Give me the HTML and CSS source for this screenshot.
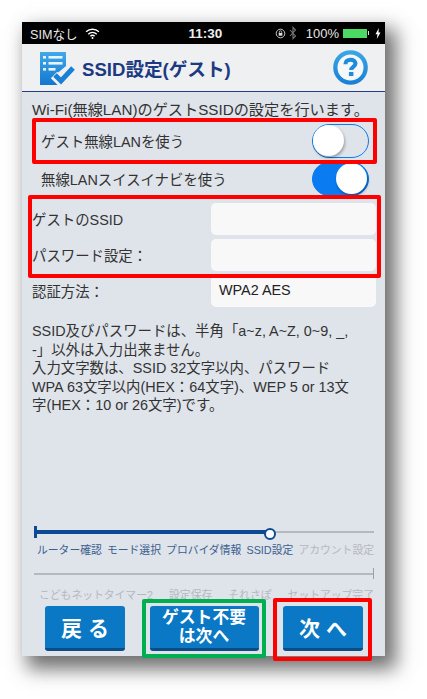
FILE: index.html
```html
<!DOCTYPE html>
<html lang="ja">
<head>
<meta charset="utf-8">
<title>SSID設定(ゲスト)</title>
<link rel="stylesheet" href="styles.css">
</head>
<body>
<div class="phone">
  <div class="status">
    <div class="status-left">
      <span>SIMなし</span>
      <svg class="wifi" viewBox="0 0 16 12" width="15" height="11"><path d="M1 4.2a10 10 0 0 1 14 0M3.4 6.7a6.6 6.6 0 0 1 9.2 0M5.7 9a3.3 3.3 0 0 1 4.6 0" fill="none" stroke="#fff" stroke-width="1.5"/><circle cx="8" cy="10.8" r="1.1" fill="#fff"/></svg>
    </div>
    <div class="status-time">11:30</div>
    <div class="status-right">
      <svg viewBox="0 0 12 12" width="11" height="11"><circle cx="6" cy="6" r="4.7" fill="none" stroke="#ddd" stroke-width="1"/><rect x="4" y="5.4" width="4" height="3" fill="#ddd"/><path d="M4.7 5.4V4.4a1.3 1.3 0 0 1 2.6 0v1" fill="none" stroke="#ddd" stroke-width=".8"/></svg>
      <svg viewBox="0 0 8 14" width="8" height="14"><path d="M1 4l5.5 6L4 12.6V1.4L6.5 4 1 10" fill="none" stroke="#777" stroke-width="1.1"/></svg>
      <span class="pct">100%</span>
      <span class="battery"></span>
      <span class="battery-tip"></span>
      <svg viewBox="0 0 6 11" width="6" height="11"><path d="M3.8 0L0.5 6.2h2L1.8 11 5.5 4.6h-2z" fill="#fff"/></svg>
    </div>
  </div>

  <header class="title-bar">
    <div class="title-main">
      <svg class="title-icon" viewBox="0 0 36 34" width="36" height="34">
        <defs><linearGradient id="g" x1="0" y1="0" x2="0" y2="1"><stop offset="0" stop-color="#3fa9ea"/><stop offset="1" stop-color="#1477cf"/></linearGradient></defs>
        <path d="M0 0h26v14L14 24l4 9H0z" fill="url(#g)"/>
        <g fill="#e8f3fb"><rect x="3" y="4" width="3" height="2.6"/><rect x="8.5" y="4" width="14" height="2.6"/><rect x="3" y="10" width="3" height="2.6"/><rect x="8.5" y="10" width="14" height="2.6"/><rect x="3" y="16" width="3" height="2.6"/><rect x="8.5" y="16" width="7" height="2.6"/></g>
        <path d="M14 23l7 7 13-14" fill="none" stroke="#eff0f2" stroke-width="9"/>
        <path d="M15 23l6 6 12-13" fill="none" stroke="#1c7fd6" stroke-width="5"/>
      </svg>
      <h1 class="title-text">SSID設定(ゲスト)</h1>
    </div>
    <svg class="help" viewBox="0 0 36 36" width="35" height="35">
      <defs><linearGradient id="h" x1="0" y1="0" x2="0" y2="1"><stop offset="0" stop-color="#3aa5e6"/><stop offset="1" stop-color="#1a82d6"/></linearGradient></defs>
      <circle cx="18" cy="18" r="15.6" fill="#f5f7f9" stroke="url(#h)" stroke-width="4.4"/>
      <path d="M12.8 14.6c0-2.9 2.2-4.6 5.3-4.6 3 0 5 1.5 5 3.9 0 3.4-4.4 3.4-4.4 6.6" fill="none" stroke="#1f8bdc" stroke-width="4.2"/>
      <rect x="16.4" y="22.6" width="4.6" height="4.2" fill="#1f8bdc"/>
    </svg>
  </header>

  <main class="content">
    <p class="intro">Wi-Fi(無線LAN)のゲストSSIDの設定を行います。</p>

    <div class="switch-row switch-row-first">
      <span class="row-label">ゲスト無線LANを使う</span>
      <span class="toggle"><span class="knob"></span></span>
    </div>
    <div class="switch-row">
      <span class="row-label">無線LANスイスイナビを使う</span>
      <span class="toggle toggle-on"><span class="knob"></span></span>
    </div>

    <div class="field-row"><span class="row-label">ゲストのSSID</span><span class="field"></span></div>
    <div class="field-row"><span class="row-label">パスワード設定：</span><span class="field"></span></div>
    <div class="field-row"><span class="row-label">認証方法：</span><span class="field">WPA2 AES</span></div>

    <p class="note">SSID及びパスワードは、半角「a~z, A~Z, 0~9, _,<br>-」以外は入力出来ません。<br>入力文字数は、SSID 32文字以内、パスワード<br>WPA 63文字以内(HEX：64文字)、WEP 5 or 13文<br>字(HEX：10 or 26文字)です。</p>

    <div class="progress">
      <div class="track track-one"><span class="track-done"></span></div>
      <div class="steps">
        <span class="done">ルーター確認</span><span class="done">モード選択</span><span class="done">プロバイダ情報</span><span class="done">SSID設定</span><span>アカウント設定</span>
      </div>
      <div class="track track-two"></div>
      <div class="steps steps-two">
        <span>こどもネットタイマー2</span><span>設定保存</span><span>それさぽ</span><span>セットアップ完了</span>
      </div>
    </div>

    <div class="buttons">
      <button class="btn btn-side btn-large">戻 る</button>
      <button class="btn btn-mid">ゲスト不要<br>は次へ</button>
      <button class="btn btn-side btn-large">次 へ</button>
    </div>
  </main>

  <div class="mark mark-one"></div>
  <div class="mark mark-two"></div>
  <div class="mark mark-green"></div>
  <div class="mark mark-three"></div>
</div>
</body>
</html>
```
FILE: styles.css
```css
* { box-sizing: border-box; }
html, body { margin: 0; padding: 0; background: #fff; }
body {
  width: 427px;
  height: 699px;
  padding: 22px 0 0 22px;
  overflow: hidden;
  font-family: "Liberation Sans", "Noto Sans CJK JP", sans-serif;
  color: #333;
}
.phone {
  position: relative;
  width: 363px;
  height: 634px;
  display: flex;
  flex-direction: column;
  background: #dfe3ea;
  box-shadow: 8px 10px 18px 3px rgba(50, 50, 50, .7);
}
.status {
  height: 22px;
  background: #000;
  color: #e6e6e6;
  display: grid;
  grid-template-columns: 1fr auto 1fr;
  align-items: center;
  padding: 0 4px 0 8px;
  font-size: 12.6px;
}
.status-left { display: flex; align-items: center; gap: 7px; }
.status-time { color: #eee; font-size: 13.5px; font-weight: 700; }
.status-right { display: flex; align-items: center; justify-content: flex-end; gap: 3px; }
.pct { margin: 0 1px 0 6px; font-size: 13px; }
.battery { width: 24px; height: 9px; background: #4cd964; display: block; }
.battery-tip { width: 1px; height: 4px; background: #ddd; margin: 0 3px 0 -2px; }

.title-bar {
  height: 48px;
  background: #eff0f2;
  border-bottom: 1px solid #2a3a8c;
  display: flex;
  align-items: center;
  justify-content: space-between;
  padding: 0 17px 0 18px;
}
.title-main { display: flex; align-items: center; gap: 6px; }
.title-icon { display: block; margin-top: 2px; }
.title-text { margin: 0; font-size: 18.6px; font-weight: 700; color: #1c3a82; }
.help { display: block; }

.content { flex: 1; display: flex; flex-direction: column; padding: 0 9px 0 10px; }
.intro { margin: 9px 0 0; font-size: 15.2px; line-height: 18px; white-space: nowrap; }

.switch-row {
  display: flex;
  align-items: center;
  justify-content: space-between;
  height: 34px;
  margin-top: 4px;
  padding: 0 7px 0 9px;
  font-size: 14.4px;
}
.switch-row-first { margin-top: 5px; }
.row-label { padding-bottom: 2px; }
.toggle {
  position: relative;
  width: 57px;
  height: 34px;
  border: 1.5px solid #0a7bf0;
  border-radius: 17px;
  background: #dfe3ea;
  display: block;
}
.knob {
  position: absolute;
  left: 0;
  top: 0;
  width: 31px;
  height: 31px;
  border-radius: 50%;
  background: #fff;
  box-shadow: 1px 2px 3px rgba(0, 0, 0, .3);
}
.toggle-on { background: #0a7bf0; }
.toggle-on .knob { left: 23px; }

.field-row {
  display: flex;
  align-items: center;
  justify-content: space-between;
  height: 32px;
  margin-top: 4px;
  font-size: 14.4px;
}
.switch-row + .field-row { margin-top: 7px; }
.field {
  width: 165px;
  height: 32px;
  background: #f8f8f9;
  border-radius: 5px;
  padding: 0 0 2px 8px;
  display: flex;
  align-items: center;
  color: #222;
}
.note { margin: 15px 0 0; font-size: 14.4px; line-height: 18.6px; white-space: nowrap; }

.progress { margin-top: auto; padding-left: 2px; }
.track { position: relative; height: 2px; background: #b3b8c1; width: 340px; }
.track-done {
  position: absolute;
  left: 0;
  top: -1px;
  width: 238px;
  height: 4px;
  background: #0c4a94;
}
.track-done::before {
  content: "";
  position: absolute;
  left: 0;
  top: -4px;
  width: 3px;
  height: 12px;
  background: #0c4a94;
}
.track-done::after {
  content: "";
  position: absolute;
  right: -4px;
  top: -2px;
  width: 8px;
  height: 8px;
  border: 2px solid #0c4a94;
  border-radius: 50%;
  background: #fff;
}
.track-two::after {
  content: "";
  position: absolute;
  right: 0;
  top: -5px;
  width: 1px;
  height: 11px;
  background: #9aa0aa;
}
.steps {
  display: flex;
  justify-content: space-between;
  width: 340px;
  padding: 0 0 0 3px;
  margin-top: 9px;
  font-size: 10.8px;
  line-height: 16px;
  color: #b4b8c0;
  white-space: nowrap;
}
.steps .done { color: #3b5f8f; }
.track-two { margin-top: 15px; }
.steps-two { padding: 0 0 0 5px; margin-top: 12px; }

.buttons {
  display: flex;
  justify-content: space-between;
  padding: 0 13px 0 13px;
  margin-top: 3px;
  margin-bottom: 5px;
}
.btn {
  height: 45px;
  border: 0;
  border-bottom: 3px solid #0b4d82;
  border-radius: 3px;
  background: #0a78c4;
  color: #fff;
  font-family: inherit;
  font-weight: 700;
  padding: 0;
}
.btn-side { width: 80px; }
.btn-large { font-size: 21px; }
.btn-mid { width: 109px; font-size: 16.8px; line-height: 19px; }

.mark { position: absolute; border: 4px solid #f00; border-radius: 2px; }
.mark-one { left: 10px; top: 96px; width: 345px; height: 46px; }
.mark-two { left: 6px; top: 173px; width: 353px; height: 83px; }
.mark-green { left: 120px; top: 577px; width: 124px; height: 59px; border-color: #00b050; }
.mark-three { left: 251px; top: 576px; width: 99px; height: 63px; }
```
